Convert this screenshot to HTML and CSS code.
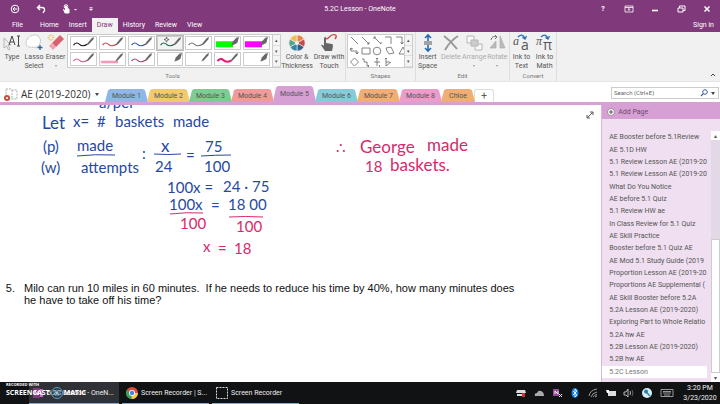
FILE: index.html
```html
<!DOCTYPE html>
<html lang="en">
<head>
<meta charset="utf-8">
<title>5.2C Lesson - OneNote</title>
<link rel="stylesheet" href="styles.css">
</head>
<body>
<svg class="defs" aria-hidden="true">
  <symbol id="pen" viewBox="0 0 27 14"><path d="M26 0 25 3 20 8.500 17 10 18 7.500 23 1.500z" fill="#686868"/></symbol>
  <symbol id="wave" viewBox="0 0 27 14"><path d="M2 9.500C4 6 7 6.500 9 8.500S14 11 18 8.500" fill="none" stroke="currentColor" stroke-width="1.300"/></symbol>
  <symbol id="brush" viewBox="0 0 27 14"><path d="M27 0 25 7 21 9 18 10 20 5 24 1z" fill="#686868"/></symbol>
</svg>
<header class="titlebar">
  <div class="quick">
    <button aria-label="Back"><svg width="10" height="10" viewBox="0 0 10 10"><circle cx="5" cy="5" r="3.800"/><path d="M7.500 5H3M5 3 3 5l2 2"/></svg></button>
    <button aria-label="Undo"><svg width="10" height="10" viewBox="0 0 10 10"><path d="M4 1 1.500 3.500 4 6M2 3.500h4q3 0 2.500 3L7 9" stroke-width="1.400"/></svg></button>
    <button aria-label="Touch mode"><svg width="16" height="10" viewBox="0 0 16 10"><circle cx="4" cy="2.500" r="1.800"/><path d="M3.500 2v5L1.500 5.500 3 9h4V5L4.500 4.500V2z" fill="#fff"/><path d="M12 5h3l-1.500 1.500z" fill="#fff" stroke="none"/></svg></button>
    <button aria-label="Customize toolbar"><svg width="6" height="10" viewBox="0 0 6 10"><path d="M1.500 3.500h3M1.500 5h3L3 6.500z" fill="#fff" stroke-width=".7"/></svg></button>
  </div>
  <h1>5.2C Lesson - OneNote</h1>
  <div class="window-buttons">
    <button aria-label="Help">?</button>
    <button aria-label="Ribbon display options"><svg width="10" height="8" viewBox="0 0 10 8"><path d="M1 1h8v6H1zM1 2.500h8M5 6V3.500M3.800 4.700 5 3.500l1.200 1.200" stroke-width=".8"/></svg></button>
    <button aria-label="Minimize"><svg width="8" height="8" viewBox="0 0 8 8"><path d="M1 5.500h6" stroke-width="1.600"/></svg></button>
    <button aria-label="Restore"><svg width="9" height="8" viewBox="0 0 9 8"><path d="M1 3h5v4H1zM2.500 3V1h5.500v4.500H6" /></svg></button>
    <button aria-label="Close"><svg width="8" height="8" viewBox="0 0 8 8"><path d="m1.500 1.500 5 5m0-5-5 5" stroke-width="1.500"/></svg></button>
  </div>
</header>
<nav class="menu">
  <button>File</button><button>Home</button><button>Insert</button><button class="active">Draw</button><button>History</button><button>Review</button><button>View</button>
  <button class="signin">Sign in</button>
</nav>
<section class="ribbon" aria-label="Draw tools">
  <div class="group tools">
    <div class="row">
      <button class="tool w-type"><svg width="18" height="18" viewBox="0 0 18 18"><path d="M1 4v10l2.500-2 2 4 1.500-1-2-4h3z" fill="#eee" stroke="#aaa" stroke-width=".8"/><path d="m6 11 3-9 3 9M7 8h4M14 2h3m-1.500 0v10M14 12h3" fill="none" stroke="#454545"/></svg>Type</button>
      <button class="tool w-lasso"><svg width="18" height="18" viewBox="0 0 18 18"><path d="M9 1c6-1 8 7 5 10-2 2-3 3-7 2C1 14 0 9 2 6s3-4 7-5z" fill="#fff" stroke="#888" stroke-width=".6" stroke-dasharray="1 .5"/><path d="M15 11v5m-2.500-2.500h5" stroke="#2d6499" stroke-width="1.300"/></svg>Lasso<br>Select</button>
      <button class="tool w-eraser"><svg width="18" height="18" viewBox="0 0 18 18"><path d="m13 1 4 4-8 8-4-4z" fill="#d8626e"/><path d="m5 9 4 4-3 3-4-4z" fill="#f3a1aa"/><path d="M4 0v7M.5 3.500h7M1.500 1l5 5m0-5-5 5" stroke="#ecb44b" stroke-width=".8"/><circle cx="4" cy="3.500" r="1.300" fill="#fff"/></svg>Eraser<span class="caret"></span></button>
      <div class="gallery">
        <div class="pens">
          <button class="black" aria-label="Black pen"><svg><use href="#wave"/><use href="#pen"/></svg></button>
          <button class="red" aria-label="Red pen"><svg><use href="#wave"/><use href="#pen"/></svg></button>
          <button class="blue" aria-label="Blue pen"><svg><use href="#wave"/><use href="#pen"/></svg></button>
          <button class="green selected" aria-label="Green pen"><svg viewBox="0 0 27 14"><use href="#wave"/><use href="#pen"/><path d="m9 0 .7 2.300L12 3l-2.300.700L9 6l-.7-2.300L6 3l2.300-.7z" fill="#fff" stroke="#333" stroke-width=".7"/></svg></button>
          <button class="gray" aria-label="Gray pen"><svg><use href="#wave"/><use href="#pen"/></svg></button>
          <button aria-label="Green highlighter"><svg viewBox="0 0 27 14"><path d="M0 5h20v7H0z" fill="#0f0"/><use href="#brush"/></svg></button>
          <button aria-label="Magenta highlighter"><svg viewBox="0 0 27 14"><path d="M0 5h20v7H0z" fill="#f0f"/><use href="#brush"/></svg></button>
          <button class="pink" aria-label="Pink pen"><svg><use href="#wave"/><use href="#pen"/></svg></button>
          <button aria-label="Pink highlighter"><svg viewBox="0 0 27 14"><path d="M0 9h20v3H0z" fill="#f49ab8"/><use href="#pen"/></svg></button>
          <button class="rose" aria-label="Rose pen"><svg><use href="#wave"/><use href="#pen"/></svg></button>
          <button aria-label="White marker"><svg><use href="#brush"/></svg></button>
          <button aria-label="White pen"><svg><use href="#pen"/></svg></button>
          <button aria-label="Thick pink pen"><svg viewBox="0 0 27 14"><path d="M2 9.500C4 6 7 6.500 9 8.500S14 11 18 8.500" fill="none" stroke="#f01870" stroke-width="2.500"/><use href="#pen"/></svg></button>
          <button aria-label="White highlighter"><svg><use href="#brush"/></svg></button>
        </div>
        <div class="stepper"><button aria-label="Previous pens">▴</button><button aria-label="Next pens">▾</button><button aria-label="More pens">▾</button></div>
      </div>
      <button class="tool w-color"><svg width="18" height="18" viewBox="-9 -9 18 18"><g stroke="#f2f2f2" stroke-width=".6"><path d="M0 0V-8A8 8 0 0 1 7-4z" fill="#e8824a"/><path d="M0 0 7-4A8 8 0 0 1 7 4z" fill="#c64b4b"/><path d="M0 0 7 4A8 8 0 0 1 0 8z" fill="#395c85"/><path d="M0 0V8A8 8 0 0 1-7 4z" fill="#3288ad"/><path d="M0 0-7 4A8 8 0 0 1-7-4z" fill="#56a28a"/><path d="M0 0-7-4A8 8 0 0 1 0-8z" fill="#efbd56"/></g><circle r="2" fill="#f2f2f2"/></svg>Color &amp;<br>Thickness</button>
      <button class="tool w-touch"><svg width="18" height="18" viewBox="0 0 18 18"><path d="M5 3C7 8 9 2 12 1s6 0 3 4" fill="none" stroke="#c8473d" stroke-width="1.300"/><path d="M4 4q1.500-1 2 0v5l6 1q1 0 1 2l-1 5H5L1 11q1-1 3 1z" fill="#666"/></svg>Draw with<br>Touch</button>
    </div>
    <div class="label">Tools</div>
  </div>
  <div class="group shapes">
    <div class="row">
      <div class="gallery">
        <button class="shape-grid" aria-label="Shapes"><svg width="56" height="32" viewBox="0 1 56 32" fill="none" stroke="#666" stroke-width=".8"><path d="m3 3 7 7M14 3l7 7m-2 0h2V8M26 3l7 7m0 0v-2M26 5V3h2M37 3h6v7M48 3h6v7m-1.500-2L54 10l1.500-2M3 14v3h6v3M2 16l1-2 2 1m2.500 3L9 20l1.500-2M14 14h8v6h-8zM38 14l5-1 3 6-5 1-2-3zM51 20l4-7 3 7z"/><circle cx="29" cy="17" r="3.800"/><path d="m6.500 24 4 4-4 4-4-4zM14 25h2v3h3v4h2m-1-1 1 1-1 1M29 24v8M26 28h6m-4-3 1-1 1 1m1 6 1 1-1 1M38 24v8m-1-7 1-1 1 1m-1 3h4m-4 4 5-4"/></svg></button>
        <div class="stepper"><button aria-label="Previous shapes">▴</button><button aria-label="Next shapes">▾</button><button aria-label="More shapes">▾</button></div>
      </div>
    </div>
    <div class="label">Shapes</div>
  </div>
  <div class="group edit">
    <div class="row">
      <button class="tool"><svg width="18" height="18" viewBox="0 0 18 18"><path d="M5 8h8M5 10h8" stroke="#555"/><path d="M9 7V1M6 4l3-3 3 3M9 11v6m-3-3 3 3 3-3" fill="none" stroke="#286bb0" stroke-width="1.600"/></svg>Insert<br>Space</button>
      <button class="tool off"><svg width="18" height="18" viewBox="0 0 18 18"><path d="M2 2q7 5 13 13M16 2Q8 7 3 16" fill="none" stroke="#999" stroke-width="2"/></svg>Delete</button>
      <button class="tool off"><svg width="18" height="18" viewBox="0 0 18 18" stroke="#b5b5b5"><path d="M2 2h7v7H2zM10 10h7v6h-7z" fill="#f9f9f9"/><path d="M6 6h7v6H6z" fill="#ccc"/></svg>Arrange<span class="caret"></span></button>
      <button class="tool off"><svg width="18" height="18" viewBox="0 0 18 18"><path d="M2 14 8 7v7zM12 2v12h5z" fill="#bbb" stroke="#aaa" stroke-width=".7"/><path d="M3 6q1-5 6-3M7 1l2 2-2 2" fill="none" stroke="#777"/></svg>Rotate<span class="caret"></span></button>
    </div>
    <div class="label">Edit</div>
  </div>
  <div class="group convert">
    <div class="row">
      <button class="tool"><svg width="18" height="18" viewBox="0 0 18 18"><text x="0" y="11" class="ink-letter">a</text><text x="8" y="16" class="plain-letter">a</text><path d="M5 3q4-4 7 1m-2.500-.5L12 5l1.500-3" fill="none" stroke="#2c70b5" stroke-width="1.300"/></svg>Ink to<br>Text</button>
      <button class="tool"><svg width="18" height="18" viewBox="0 0 18 18"><text x="0" y="11" class="ink-letter">π</text><text x="7" y="16" class="plain-letter">π</text><path d="M5 3q4-4 7 1m-2.500-.5L12 5l1.500-3" fill="none" stroke="#2c70b5" stroke-width="1.300"/></svg>Ink to<br>Math</button>
    </div>
    <div class="label">Convert</div>
  </div>
  <button class="collapse" aria-label="Collapse ribbon"><svg width="6" height="5" viewBox="0 0 6 5"><path d="m1 4 2-2 2 2" fill="none" stroke="#444"/></svg></button>
</section>
<div class="notebook">
  <button class="book"><svg width="15" height="15" viewBox="0 0 15 15"><path d="M2 2h5l1 1h5v9H2zM8 3v9" fill="#fff" stroke="#999" stroke-width=".8" stroke-dasharray="2 1"/><circle cx="3" cy="11" r="3" fill="#c74d3e"/><path d="m2 10 2 2m0-2-2 2" stroke="#fff" stroke-width=".8"/></svg>AE (2019-2020)<span class="caret dark"></span></button>
  <nav class="sections">
    <button class="s1">Module 1</button><button class="s2">Module 2</button><button class="s3">Module 3</button><button class="s4">Module 4</button><button class="s5 current">Module 5</button><button class="s6">Module 6</button><button class="s2b">Module 7</button><button class="s8">Module 8</button><button class="s2b short">Chloe</button><button class="add" aria-label="New section">+</button>
  </nav>
  <label class="search"><input type="text" placeholder="Search (Ctrl+E)" aria-label="Search"><svg width="8" height="8" viewBox="0 0 8 8"><circle cx="5" cy="3" r="2.300" fill="none" stroke="#3b6398"/><path d="M3.300 4.700 1 7" stroke="#3b6398" stroke-width="1.200"/></svg><span class="caret dark"></span></label>
</div>
<div class="workspace">
  <main class="canvas">
    <svg class="ink" width="560" height="160" viewBox="0 105 560 160" role="group" aria-label="Handwritten work">
      <g class="blue-ink">
        <text x="99" y="108">a/per</text>
        <text x="42" y="129" class="big">Let</text><text x="73" y="127">x=</text><text x="97" y="127">#</text><text x="115" y="127">baskets</text><text x="173" y="127">made</text>
        <text x="43" y="152">(p)</text><text x="77" y="151">made</text><text x="41" y="173">(w)</text><text x="81" y="173">attempts</text>
        <text x="142" y="159">:</text><text x="161" y="152" class="big">x</text><text x="155" y="172">24</text><text x="186" y="161">=</text><text x="205" y="152">75</text><text x="204" y="172">100</text>
        <text x="167" y="193">100x =</text><text x="223" y="192">24 · 75</text>
        <text x="169" y="210">100x</text><text x="211" y="211">=</text><text x="228" y="210">18 00</text>
        <path d="M77 156q18-2 38-1M154 154q14 1 27 0M201 156q14-1 30-1"/>
      </g>
      <g class="pink-ink">
        <path d="M170 214q16-2 33-1M229 217q16-1 34 0"/>
        <text x="180" y="229">100</text><text x="236" y="232">100</text><text x="203" y="252">x</text><text x="218" y="254">=</text><text x="234" y="254">18</text>
        <text x="336" y="153">∴</text><text x="360" y="153" class="big">George</text><text x="427" y="151" class="big">made</text><text x="365" y="172">18</text><text x="390" y="171" class="big">baskets.</text>
      </g>
    </svg>
    <ol start="5" class="problem"><li>Milo can run 10 miles in 60 minutes.&nbsp; If he needs to reduce his time by 40%, how many minutes does he have to take off his time?</li></ol>
    <button class="expand" aria-label="Full page view"><svg width="8" height="8" viewBox="0 0 8 8"><path d="M1.500 6.500l5-5M4 1h3v3M1 4v3h3" fill="none" stroke="#555"/></svg></button>
  </main>
  <aside class="pages">
    <button class="add-page"><svg width="8" height="8" viewBox="0 0 8 8"><circle cx="4" cy="4" r="3.500" fill="#fff" stroke="#777" stroke-width=".7"/><path d="M4 2v4M2 4h4" stroke="#555"/></svg>Add Page</button>
    <div class="page-area">
      <div class="page-list">
        <button>AE Booster before 5.1Review</button><button>AE 5.1D HW</button><button>5.1 Review Lesson AE (2019-20</button><button>5.1 Review Lesson AE (2019-20</button><button>What Do You Notice</button><button>AE before 5.1 Quiz</button><button>5.1 Review HW ae</button><button>In Class Review for 5.1 Quiz</button><button>AE Skill Practice</button><button>Booster before 5.1 Quiz AE</button><button>AE Mod 5.1 Study Guide (2019</button><button>Proportion Lesson AE (2019-20</button><button>Proportions AE Supplemental (</button><button>AE Skill Booster before 5.2A</button><button>5.2A Lesson AE (2019-2020)</button><button>Exploring Part to Whole Relatio</button><button>5.2A hw AE</button><button>5.2B Lesson AE (2019-2020)</button><button>5.2B hw AE</button><button class="open">5.2C Lesson</button>
      </div>
      <div class="scroll"><button aria-label="Scroll up">▴</button><div class="track"></div><div class="thumb"></div><button aria-label="Scroll down">▾</button></div>
    </div>
  </aside>
</div>
<footer class="taskbar">
  <button class="task front"><svg width="11" height="12" viewBox="0 0 11 12"><path d="M3 2h7v8H3z" fill="#bd72c5"/><path d="M0 1h7v10H0z" fill="#80397b"/><path d="M2 8V4l3 4V4" fill="none" stroke="#fff"/></svg><span>5.2C Lesson - OneN...</span></button>
  <button class="task"><svg width="12" height="12" viewBox="0 0 12 12"><circle cx="6" cy="6" r="6" fill="#e24a3b"/><path d="M6 6 .8 3A6 6 0 0 0 5.500 12z" fill="#35a35a"/><path d="M6 6h6a6 6 0 0 1-6.500 6z" fill="#f6cb45"/><circle cx="6" cy="6" r="3" fill="#fff"/><circle cx="6" cy="6" r="2.200" fill="#4285e8"/></svg><span>Screen Recorder | S...</span></button>
  <button class="task"><svg width="12" height="12" viewBox="0 0 12 12"><path d="M.5.500h11v11H.5z" fill="none" stroke="#ddd" stroke-dasharray="2 1"/></svg><span>Screen Recorder</span></button>
  <div class="tray">
    <svg viewBox="0 0 12 12"><path d="M2 3h8l1 3H1zM2 7h8v2H2z" fill="#ddd"/><path d="M7 6h3v4H7z" fill="#c33"/></svg>
    <svg viewBox="0 0 12 12"><path d="M2 9q-1-3 2-3 1-3 4-2 3 1 3 5z" fill="#aaa"/></svg>
    <svg viewBox="0 0 12 12"><path d="M2 2h6v7H2z" fill="#9a4b9c"/><path d="M4 7V4l3 3V4M8 7l3 3m0-3-3 3" fill="none" stroke="#eee"/></svg>
    <svg viewBox="0 0 12 12"><ellipse cx="6" cy="6" rx="3.500" ry="5" fill="#1681e5"/><path d="m4 4 4 4-2 2V2l2 2-4 4" fill="none" stroke="#fff" stroke-width=".8"/></svg>
    <svg viewBox="0 0 12 12"><path d="M2 9q1-6 8-7M4 10q1-4 6-5M6 10q1-2 4-2.500M8 10l2-1" fill="none" stroke="#999"/></svg>
    <svg viewBox="0 0 12 12"><path d="M3 4h8v5H3z" fill="#ddd"/><path d="M1 3h3v3H2z" fill="#fff"/></svg>
    <svg viewBox="0 0 12 12"><path d="M1 5h2l2-3v8L3 8H1zM7 4q1 2 0 4" fill="none" stroke="#ddd" stroke-width=".8"/><path d="M9 3q2 3 0 6" fill="none" stroke="#777" stroke-width=".8"/></svg>
    <svg viewBox="0 0 12 12"><circle cx="6" cy="6" r="5" fill="#d8edf5"/><circle cx="5" cy="4.500" r="2" fill="#267fae"/><path d="m5 5 4 4" stroke="#267fae" stroke-width="1.500"/></svg>
    <svg class="keyboard" viewBox="0 0 14 12"><path d="M1 2.500h12v7H1zM3 4.500h8M3 6h8M4 8h6" fill="none" stroke="#bbb" stroke-width=".8"/></svg>
    <div class="clock">3:20 PM<br>3/23/2020</div>
  </div>
  <div class="watermark"><small>RECORDED WITH</small><div>SCREENCAST<svg width="12" height="12" viewBox="0 0 12 12"><circle cx="6" cy="6" r="5.500" fill="none" stroke="#58a2d1"/><circle cx="6" cy="6" r="3" fill="none" stroke="#58a2d1" stroke-width=".7"/><circle cx="6" cy="6" r="1.500" fill="#8fc8eb"/></svg>MATIC</div></div>
</footer>
</body>
</html>
```
FILE: styles.css
```css
* { box-sizing: border-box; }
body {
  margin: 0;
  height: 100vh;
  display: flex;
  flex-direction: column;
  overflow: hidden;
  background: #fff;
  color: #555;
  font: 7px/8px Roboto, "Open Sans", sans-serif;
}
button, input {
  font: inherit;
  color: inherit;
  background: none;
  border: 0;
  padding: 0;
  margin: 0;
}
button { white-space: nowrap; }
svg { flex: none; }
.defs { position: absolute; width: 0; height: 0; }

.titlebar {
  flex: none;
  height: 18px;
  display: grid;
  grid-template-columns: 1fr auto 1fr;
  align-items: center;
  background: #80397b;
  color: #fff;
}
.titlebar svg { display: block; fill: none; stroke: #fff; }
.titlebar h1 { margin: 0; font-size: 7px; font-weight: 400; }
.quick { display: flex; gap: 16px; padding-left: 10px; }
.quick button:nth-child(4) { margin-left: -6px; }
.window-buttons { display: flex; justify-content: flex-end; }
.window-buttons button { width: 26px; display: flex; justify-content: center; font-weight: 700; }

.menu {
  flex: none;
  height: 14px;
  display: flex;
  background: #80397b;
  color: #fff;
}
.menu button { padding: 0 5px; }
.menu button:first-child { width: 35px; }
.menu .active { background: #f3f2f3; color: #80397b; }
.menu .signin { margin-left: auto; padding: 0 6px; }

.ribbon {
  flex: none;
  height: 50px;
  display: flex;
  background: #f1f1f1;
  border-bottom: 1px solid #e4e4e4;
}
.group {
  display: flex;
  flex-direction: column;
  justify-content: space-between;
  padding: 2px 0 1px;
  border-right: 1px solid #ddd;
}
.tools { width: 346px; }
.shapes { width: 70px; }
.edit { width: 94px; }
.convert { width: 47px; }
.row { display: flex; }
.label { text-align: center; color: #777; font-size: 6px; }
.tool {
  flex: 1 0 0;
  min-width: 0;
  display: flex;
  flex-direction: column;
  align-items: center;
  text-align: center;
  line-height: 9px;
}
.tool svg { margin-bottom: 1px; overflow: visible; }
.w-type { flex: 0 0 24px; }
.w-lasso { flex: 0 0 20px; }
.w-eraser { flex: 0 0 23px; }
.off { color: #aaa; }
.caret {
  width: 0;
  height: 0;
  margin-top: 3px;
  border: 1px solid transparent;
  border-top: 2px solid #999;
}
.caret.dark { border-width: 2px; border-top: 3px solid #444; border-bottom: 0; margin: 0; }
.gallery {
  display: flex;
  height: 34px;
  background: #fff;
  border: 1px solid #ccc;
}
.tools .gallery { flex: 0 0 214px; }
.pens {
  flex: 1;
  display: grid;
  grid-template-columns: repeat(7, 1fr);
  gap: 2px;
  padding: 1px 2px;
}
.pens button { border: 1px solid #ccc; overflow: hidden; }
.pens svg { display: block; width: 100%; height: 100%; }
.pens .selected { outline: 1px solid #bbb; background: #f4f4f4; }
.black { color: #111; }
.red { color: #cc4547; }
.blue { color: #3454a5; }
.green { color: #1e6546; }
.gray { color: #777; }
.pink { color: #d75a8e; }
.rose { color: #d52d6f; }
.stepper {
  flex: 0 0 8px;
  display: flex;
  flex-direction: column;
  border-left: 1px solid #ccc;
  background: #f4f4f4;
}
.stepper button { flex: 1; line-height: 6px; font-size: 5px; border-bottom: 1px solid #ddd; }
.shapes .gallery { flex: 1; margin: 0 3px 0 1px; }
.shape-grid { flex: 1; overflow: hidden; }
.shape-grid svg { display: block; }
.ink-letter { font: italic 12px "Liberation Serif", serif; fill: #555; }
.plain-letter { font: 14px "Open Sans", sans-serif; fill: #555; }
.collapse { margin: auto 4px 2px auto; }

.notebook {
  flex: none;
  height: 23px;
  display: flex;
  align-items: flex-end;
  border-bottom: 3px solid #d6a0d5;
}
.book {
  flex: 0 0 105px;
  height: 16px;
  display: flex;
  align-items: center;
  gap: 2px;
  padding-left: 4px;
  font: 10px "Open Sans", sans-serif;
  color: #333;
}
.book .caret { margin-left: 3px; }
.sections { display: flex; align-items: flex-end; }
.sections button {
  width: 43px;
  height: 13px;
  margin-right: -1px;
  clip-path: polygon(0 100%, 3px 10%, 5px 0, 38px 0, 40px 10%, 100% 100%);
}
.sections .current { height: 16px; }
.s1 { background: #91b6e5; }
.s2 { background: #f1cb6b; }
.s3 { background: #7dcc93; }
.s4 { background: #f09b9b; }
.s5 { background: #d6a0d5; }
.s6 { background: #87cbd9; }
.s2b { background: #f0ae76; }
.s8 { background: #ec9bca; }
.sections .short { width: 34px; clip-path: polygon(0 100%, 3px 10%, 5px 0, 29px 0, 31px 10%, 100% 100%); }
.sections .add { width: 20px; clip-path: none; border: 1px solid #ddd; border-bottom: 0; border-radius: 3px 3px 0 0; font-size: 10px; }
.search {
  width: 108px;
  height: 12px;
  margin: 0 1px 3px auto;
  display: flex;
  align-items: center;
  gap: 3px;
  padding: 0 3px 0 2px;
  border: 1px solid #ccc;
}
.search input { flex: 1; min-width: 0; font-size: 6px; outline: 0; }
.search input::placeholder { color: #666; opacity: 1; }

.workspace { flex: 1; min-height: 0; display: flex; }
.canvas { flex: 1; position: relative; overflow: hidden; }
.ink { display: block; }
.ink text { font: 15px Lato, sans-serif; }
.ink .big { font-size: 17px; }
.ink path { fill: none; stroke-width: 1; }
.blue-ink text { fill: #2649a0; }
.blue-ink path { stroke: #2649a0; }
.pink-ink text { fill: #d62a6b; }
.pink-ink path { stroke: #d62a6b; }
.problem {
  max-width: 520px;
  margin: 17px 0 0;
  padding-left: 18px;
  color: #111;
  font: 11px/12px "Liberation Sans", Arial, sans-serif;
}
.problem li { padding-left: 6px; }
.expand { position: absolute; top: 6px; right: 7px; }
.pages {
  flex: 0 0 118px;
  display: flex;
  flex-direction: column;
  background: #efdff0;
  border-left: 1px solid #d9b6da;
}
.add-page {
  flex: none;
  height: 14px;
  display: flex;
  align-items: center;
  gap: 3px;
  padding-left: 5px;
  background: #d6a0d5;
  color: #6c4b6c;
}
.page-area { flex: 1; min-height: 0; display: flex; padding-top: 12px; }
.page-list {
  flex: 1;
  min-width: 0;
  display: flex;
  flex-direction: column;
  padding-bottom: 4px;
  margin-right: 4px;
}
.page-list button { flex: 1; text-align: left; padding-left: 7px; }
.page-list .open { background: #fff; color: #777; }
.scroll { flex: 0 0 9px; display: flex; flex-direction: column; background: #fff; }
.scroll button { flex: none; height: 9px; font-size: 6px; }
.track { flex: 98; background: #e3d8e6; }
.thumb { flex: 131; background: #fff; border: 1px solid #ccc; }

.taskbar {
  flex: none;
  height: 22px;
  position: relative;
  display: flex;
  gap: 3px;
  padding-left: 29px;
  background: #111214;
  color: #eee;
}
.task {
  width: 87px;
  display: flex;
  align-items: center;
  gap: 3px;
  padding-left: 4px;
  border-bottom: 1px solid #76aee5;
}
.front { width: 90px; background: #303136; }
.tray { margin-left: auto; display: flex; align-items: center; gap: 6px; }
.tray svg { width: 12px; height: 12px; }
.tray .keyboard { width: 16px; }
.clock { width: 38px; margin-right: 1px; text-align: center; line-height: 10px; }
.watermark {
  position: absolute;
  left: 6px;
  top: 0;
  color: #fff;
  font: 700 7px/12px "Open Sans", sans-serif;
}
.watermark small { display: block; font-size: 4px; line-height: 5px; }
.watermark div { display: flex; align-items: center; gap: 1px; }
```
